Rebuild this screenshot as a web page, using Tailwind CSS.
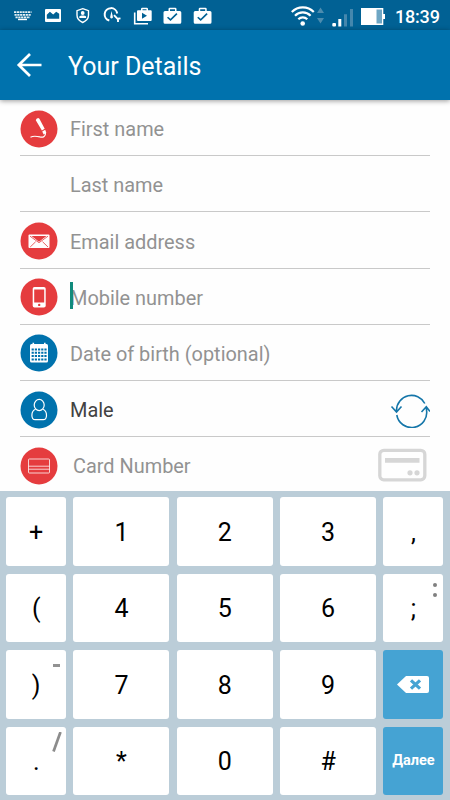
<!DOCTYPE html>
<html lang="en">
<head>
<meta charset="utf-8">
<title>Your Details</title>
<script src="https://cdn.jsdelivr.net/npm/@tailwindcss/browser@4"></script>
</head>
<body class="h-[800px] w-[450px] overflow-hidden bg-[#fefefe] font-[Roboto,'Noto_Sans',sans-serif]">
<div class="flex h-[800px] flex-col">
  <!-- Status bar -->
  <div class="flex h-[30px] shrink-0 items-center bg-[#016194] text-white">
    <svg class="h-[30px] w-[225px]" viewBox="0 0 225 30" fill="#fff">
      <path d="M14 12.200H31.500M14.500 14.800H31M15.500 17.400H30" stroke="#fff" stroke-width="1.800" stroke-dasharray="2.200 .6" opacity=".9"/>
      <path d="M18 18.700h9v1.500h-9z"/>
      <path fill-rule="evenodd" d="M46 9h14a1 1 0 0 1 1 1v11a1 1 0 0 1-1 1H46a1 1 0 0 1-1-1V10a1 1 0 0 1 1-1Zm.8 9.800h12.400v-5l-3-2-3 2.600-3.300-2.600-3.100 3z"/>
      <path d="M82.700 8.700 88.500 10.700V15.300C88.500 18.700 86 21 82.700 22.500 79.400 21 77 18.700 77 15.300V10.700Z" fill="none" stroke="#fff" stroke-width="1.400"/>
      <circle cx="82.700" cy="13" r="1.900"/><path d="M79.300 18v-1.500c1.500-1.300 5.300-1.300 6.800 0V18z"/>
      <path d="M109.300 20.500A6.300 6.300 0 1 1 117.200 13.500" fill="none" stroke="#fff" stroke-width="2"/>
      <path d="m111.500 11 1.300 5.500a1.400 1.400 0 1 1-2.500 0z"/>
      <path d="m114 15.200 4.500 4.600M117.700 18.800l2.800-.4M118 19.300v2.600" stroke="#fff" stroke-width="1.900"/>
      <path d="M134.700 12.500V23.700H148" fill="none" stroke="#fff" stroke-width="1.600"/>
      <path fill-rule="evenodd" d="M138 10.300h3V9q0-1.300 1.300-1.300h4.400Q148 7.700 148 9v1.300h2.700q1 0 1 1v8.700q0 1-1 1H138q-1 0-1-1v-8.700q0-1 1-1Zm4.500 0h4v-1h-4Zm-.5 2.400v6l5-3z"/>
      <path id="bag" fill-rule="evenodd" d="M165 11h3.500V9q0-1.300 1.300-1.300h5.400q1.300 0 1.300 1.300v2h3.300q1.500 0 1.500 1.500v9.700q0 1.500-1.500 1.500H165q-1.500 0-1.500-1.500v-9.700q0-1.500 1.500-1.500Zm5 0h5V9.300h-5Zm-1.900 5.700-1.100 1.100 3.500 3.300 7-6.900-1.200-1.100-5.800 5.600z"/>
      <use href="#bag" x="30.200"/>
    </svg>
    <svg class="h-[30px] w-[170px]" viewBox="225 0 170 30" fill="none">
      <g stroke="#fff" stroke-width="2.200"><path d="M291.800 12a15.500 15.500 0 0 1 22 0"/><path d="M295 15.700a11 11 0 0 1 15.600 0"/><path d="M298.300 19.200a6.500 6.500 0 0 1 9 0"/></g>
      <circle cx="302.700" cy="23.500" r="2.300" fill="#fff"/>
      <path d="m317 13 3.500-5.500L324 13zm0 5h7l-3.500 5.500z" fill="#4c8caf"/>
      <rect x="332.300" y="23" width="3.700" height="3.500" rx="1" fill="#fff"/><path d="M338.300 19h3v7.500h-3z" fill="#fff"/><path d="M344 14.300h3v12.200h-3zM350 9h3v17.500h-3z" fill="#4587ad"/>
      <path d="M361 8h22.300v6h1.700v5h-1.700v6H361z" fill="#fff"/><path d="M376.500 9.500H382v14h-5.500z" fill="#6ea6c4"/>
    </svg>
    <span class="pt-[3px] text-[18px] leading-none font-medium tracking-[-0.200px]">18:39</span>
  </div>
  <!-- App bar -->
  <header class="z-10 flex h-[70px] shrink-0 items-center bg-[#0072ad] pl-[16px] text-white shadow-[0_1px_5px_rgba(0,0,0,.4)]">
    <svg class="h-[26px] w-[27px]" viewBox="0 0 27 26" fill="none" stroke="#fff" stroke-width="2.700"><path d="M14 2 2.800 13 14 24M2.800 13H25.500"/></svg>
    <h1 class="ml-[25px] pt-[3px] text-[25px] leading-none">Your Details</h1>
  </header>
  <!-- Form -->
  <main class="h-[391px] shrink-0 overflow-hidden px-[20px] text-[19.920px] text-[#929292]">
    <div class="flex h-[56.200px] items-center border-b border-[#c9c9c9] pt-[2px]">
      <svg class="h-[38px] w-[38px] shrink-0" viewBox="-.5 -.5 38 38"><circle cx="18.500" cy="18.500" r="18.500" fill="#e53c3e"/><path d="M15.300 9.800q.3-2 2.400-2.200l1.200.7 5.300 10-2.800 1.700zM21.700 21l3-1.800 1.100 3-2.600 1.800z" fill="#fff"/><path d="M25 22c.3 3.700-2.300 5.300-5.500 4.500-3.500-.9-6-1.600-9.500.2" fill="none" stroke="#fff" stroke-width="1.200"/></svg>
      <span class="ml-[12px] pt-[3px]">First name</span>
    </div>
    <div class="flex h-[56.200px] items-center border-b border-[#c9c9c9] pt-[2px]"><span class="ml-[50px] pt-[2px]">Last name</span></div>
    <div class="flex h-[56.200px] items-center border-b border-[#c9c9c9] pt-[2px]">
      <svg class="h-[38px] w-[38px] shrink-0" viewBox="-.5 -.5 38 38"><circle cx="18.500" cy="18.500" r="18.500" fill="#e53c3e"/><rect x="8" y="12" width="21" height="13.500" rx="1" fill="#fff"/><path d="m9.500 13.700 9 6.500 9-6.500M9.700 24.500l5.500-5.300M27.500 24.500l-5.500-5.300" fill="none" stroke="#e53c3e" stroke-width=".8"/><path d="m11 13.500 7.500 5.700 7.500-5.700z" fill="#e53c3e"/></svg>
      <span class="ml-[12px] pt-[3px]">Email address</span>
    </div>
    <div class="flex h-[56.200px] items-center border-b border-[#c9c9c9] pt-[2px]">
      <svg class="h-[38px] w-[38px] shrink-0" viewBox="-.5 -.5 38 38"><circle cx="18.500" cy="18.500" r="18.500" fill="#e53c3e"/><rect x="12.200" y="8.500" width="13" height="20.500" rx="1.800" fill="#fff"/><path d="M13.700 11h10v13h-10z" fill="#e53c3e"/><circle cx="18.700" cy="26.400" r="1.200" fill="#e53c3e"/></svg>
      <span class="relative ml-[12px] pt-[3px]"><i class="absolute top-[1px] left-0 h-[27px] w-[2.500px] bg-[#108a7c]"></i>Mobile number</span>
    </div>
    <div class="flex h-[56.200px] items-center border-b border-[#c9c9c9] pt-[2px]">
      <svg class="h-[38px] w-[38px] shrink-0" viewBox="-.5 -.5 38 38"><circle cx="18.500" cy="18.500" r="18.500" fill="#0072ad"/><rect x="9.500" y="9.500" width="18" height="18.500" rx="1.500" fill="#fff"/><path d="M12 8.200h1.600v3H12zM23.500 8.200h1.600v3h-1.600z" fill="#fff"/><path d="M12.200 14v12.500M15.400 14v12.500M18.600 14v12.500M21.800 14v12.500M25 14v12.500" stroke="#0072ad" stroke-width="2.200" stroke-dasharray="2 1.300"/></svg>
      <span class="ml-[12px] pt-[3px]">Date of birth (optional)</span>
    </div>
    <div class="flex h-[56.200px] items-center border-b border-[#c9c9c9] pt-[2px]">
      <svg class="h-[38px] w-[38px] shrink-0" viewBox="-.5 -.5 38 38"><circle cx="18.500" cy="18.500" r="18.500" fill="#0072ad"/><g fill="none" stroke="#fff" stroke-width="1.200"><ellipse cx="18.700" cy="13.500" rx="5" ry="5.600"/><path d="M15 17.700c-2.500 1-3.600 3-3.600 6 0 3.300.8 4.500 3.300 4.500h8c2.500 0 3.300-1.200 3.300-4.500 0-3-1.100-5-3.600-6"/></g></svg>
      <span class="ml-[12px] pt-[3px] text-[#424242]">Male</span>
      <svg class="ml-auto h-[36px] w-[40px]" viewBox="0 0 40 36" fill="none" stroke="#1576a9" stroke-width="1.600"><path d="M6.500 19.500V18A15 15 0 0 1 34.800 11.500M1.500 14.500 6.500 20 11.500 14.500M6.800 23A15 15 0 0 0 36.500 18V15M31.500 20 36.300 14.800 40 19.500"/></svg>
    </div>
    <div class="flex h-[56.200px] items-center pt-[2px]">
      <svg class="h-[38px] w-[38px] shrink-0" viewBox="-.5 -.5 38 38"><circle cx="18.500" cy="18.500" r="18.500" fill="#e53c3e"/><g fill="none" stroke="#fff" stroke-opacity=".9" stroke-width=".85"><rect x="8" y="11.500" width="21" height="14" rx=".8"/><path d="M8 18.700h21M8 21.700h21"/></g></svg>
      <span class="ml-[15px] pt-[2px]">Card Number</span>
      <svg class="mr-[3px] mb-[2px] ml-auto h-[34px] w-[50px]" viewBox="0 0 50 34"><rect x="2.800" y="2.300" width="45" height="29.500" rx="4" fill="none" stroke="#d6d6d6" stroke-width="3.300"/><path d="M8 10h34.500v4.800H8z" fill="#d6d6d6"/><circle cx="33" cy="24.800" r="2.600" fill="#d6d6d6"/><circle cx="40" cy="24.800" r="2.600" fill="#d6d6d6"/></svg>
    </div>
  </main>
  <!-- Keyboard -->
  <section class="grid h-[309px] shrink-0 grid-cols-[60px_96px_96px_96px_60px] grid-rows-[repeat(4,68.800px)] gap-x-[7.300px] gap-y-[7.700px] bg-[#bbcdd8] pt-[6.200px] pl-[6.200px] text-[25px] text-black *:flex *:items-center *:justify-center *:rounded-[3px] *:bg-white *:pt-[2px]">
    <div>+</div><div>1</div><div>2</div><div>3</div><div>,</div>
    <div>(</div><div>4</div><div>5</div><div>6</div>
    <div class="relative">;<span class="absolute top-[9px] right-[6px] flex flex-col gap-[6px]"><i class="size-[4px] rounded-full bg-[#808080]"></i><i class="size-[4px] rounded-full bg-[#808080]"></i></span></div>
    <div class="relative">)<i class="absolute top-[14px] right-[6px] h-[3px] w-[7px] bg-[#929292]"></i></div><div>7</div><div>8</div><div>9</div>
    <div class="!bg-[#45a3d3] !pt-0"><svg class="h-[17px] w-[32px]" viewBox="0 0 32 17"><path d="M9 0H30q2 0 2 2v13q0 2-2 2H9L0 8.500z" fill="#fff"/><path d="m14 4.300 9 8.400M23 4.300l-9 8.400" stroke="#45a3d3" stroke-width="3.200"/></svg></div>
    <div class="relative">.<svg class="absolute top-[5px] right-[4px] h-[20px] w-[10px]" viewBox="0 0 10 20"><path d="M8.500 0 1.500 19.500" stroke="#8c8c8c" stroke-width="2.700"/></svg></div><div>*</div><div>0</div><div>#</div>
    <div class="!bg-[#45a3d3] !pt-0 text-[14.500px] font-bold text-white">Далее</div>
  </section>
</div>
</body>
</html>
